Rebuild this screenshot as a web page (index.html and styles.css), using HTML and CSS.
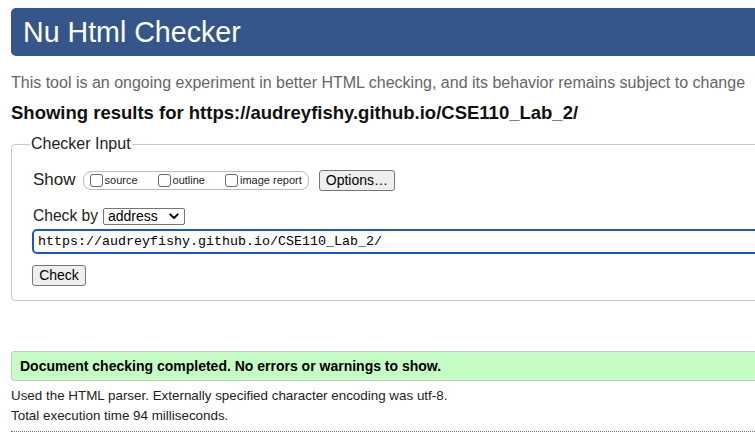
FILE: index.html
```html
<!DOCTYPE html>
<html>
<head>
<meta charset="utf-8">
<link rel="stylesheet" href="styles.css">
</head>
<body>
<h1 class="title">Nu Html Checker</h1>
<p class="intro">This tool is an ongoing experiment in better HTML checking, and its behavior remains subject to change</p>
<p class="results">Showing results for https://audreyfishy.github.io/CSE110_Lab_2/</p>
<fieldset class="checker">
  <legend class="legend">Checker Input</legend>
  <div class="row show-row">
    <span class="label">Show</span>
    <span class="opts">
      <label class="opt"><input type="checkbox" class="cb">source</label>
      <label class="opt"><input type="checkbox" class="cb">outline</label>
      <label class="opt"><input type="checkbox" class="cb">image report</label>
    </span>
    <button class="btn options">Options…</button>
  </div>
  <div class="row by-row">
    <span class="label label-by">Check by</span>
    <span class="select"><span>address</span><svg class="chev" width="10" height="7" viewBox="0 0 10 7"><path d="M1.2 1.3 L5 5 L8.8 1.3" fill="none" stroke="#000" stroke-width="1.8" stroke-linecap="round" stroke-linejoin="round"/></svg></span>
  </div>
  <div class="url">https://audreyfishy.github.io/CSE110_Lab_2/</div>
  <button class="btn check">Check</button>
</fieldset>
<div class="success">Document checking completed. No errors or warnings to show.</div>
<p class="info first">Used the HTML parser. Externally specified character encoding was utf-8.</p>
<p class="info">Total execution time 94 milliseconds.</p>
<hr class="dots">
</body>
</html>
```
FILE: styles.css
```css
html, body {
  margin: 0;
  padding: 0;
  overflow: hidden;
  background: #fff;
}
body {
  padding: 8px 0 0 11px;
  font-family: "Liberation Sans", Arial, sans-serif;
  color: #000;
  width: 744px;
}
.title {
  margin: 0 -40px 0 0;
  height: 48px;
  background: #34568a;
  color: #fff;
  font-weight: normal;
  font-size: 28.6px;
  line-height: 48px;
  padding-left: 12px;
  border-radius: 5px 0 0 5px;
}
.intro {
  margin: 17px 0 0 0;
  font-size: 16px;
  line-height: 20px;
  color: #666;
  white-space: nowrap;
}
.results {
  margin: 10px 0 0 0;
  font-size: 18.5px;
  line-height: 20px;
  font-weight: bold;
  color: #111;
  white-space: nowrap;
}
.checker {
  margin: 12px -40px 0 0;
  border: 1px solid #c8c8c8;
  border-radius: 4px 0 0 4px;
  padding: 15px 21px 14px 21px;
  min-width: 0;
}
.legend {
  font-size: 16px;
  padding: 0 1px;
  margin-left: -3px;
  color: #222;
}
.row {
  display: flex;
  align-items: center;
}
.label {
  font-size: 17px;
  color: #222;
}
.label-by {
  font-size: 15.6px;
}
.show-row {
  height: 24px;
}
.opts {
  display: flex;
  align-items: center;
  margin-left: 7px;
  height: 17px;
  border: 1px solid #bbb;
  border-radius: 8px;
  padding: 0 6px 0 6px;
}
.opt {
  display: flex;
  align-items: center;
  font-size: 11px;
  color: #222;
  margin-right: 20px;
}
.opt:last-child {
  margin-right: 0;
}
.cb {
  appearance: none;
  -webkit-appearance: none;
  width: 13px;
  height: 13px;
  margin: 0 2px 0 0;
  border: 1px solid #666;
  border-radius: 3px;
  background: #fff;
}
.btn {
  font-family: "Liberation Sans", Arial, sans-serif;
  font-size: 14px;
  background: #efefef;
  border: 1px solid #767676;
  border-radius: 3px;
  color: #000;
  padding: 0 6px;
  height: 21px;
  line-height: 19px;
}
.options {
  margin-left: 10px;
  width: 76px;
}
.by-row {
  margin-top: 15px;
}
.select {
  display: flex;
  align-items: center;
  justify-content: space-between;
  margin-left: 5px;
  width: 82px;
  height: 17px;
  box-sizing: border-box;
  border: 1px solid #767676;
  border-radius: 2px;
  padding: 0 5px 0 4px;
  font-size: 14px;
}
.chev {
  display: block;
}
.url {
  margin: 4px -40px 0 -1px;
  height: 21px;
  border: 2px solid #1a56c8;
  border-radius: 5px 0 0 5px;
  font-family: "Liberation Mono", "DejaVu Sans Mono", monospace;
  font-size: 13.33px;
  line-height: 21px;
  padding-left: 4px;
  color: #000;
}
.check {
  margin-top: 11px;
  margin-left: -1px;
  width: 54px;
  display: block;
}
.success {
  margin: 50px -40px 0 0;
  height: 28px;
  line-height: 28px;
  background: #c4fec4;
  border: 1px solid #c8c8c8;
  border-radius: 3px 0 0 3px;
  padding-left: 8px;
  font-size: 14px;
  font-weight: bold;
  color: #000;
}
.info {
  margin: 0;
  font-size: 13.4px;
  line-height: 20px;
  color: #222;
}
.info.first {
  margin-top: 5px;
}
.dots {
  margin: 5px -40px 0 0;
  border: 0;
  border-top: 1px dotted #777;
  height: 0;
}
```
